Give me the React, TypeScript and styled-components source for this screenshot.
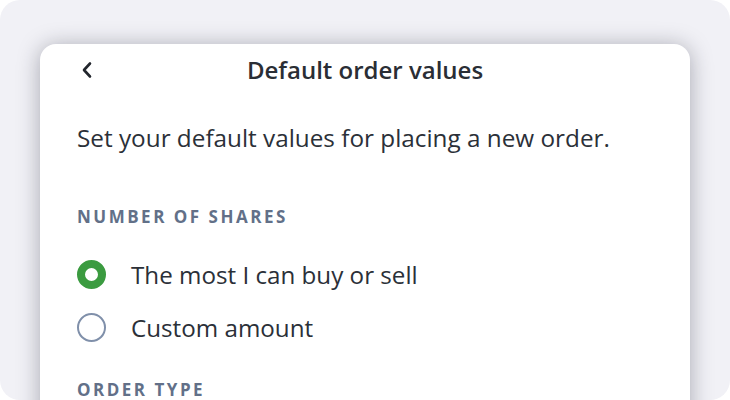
import React from "react";
import styled, { createGlobalStyle } from "styled-components";

const Global = createGlobalStyle`
  html, body { margin: 0; padding: 0; background: #ffffff; }
  body { font-family: "Open Sans", "Noto Sans", sans-serif; -webkit-font-smoothing: antialiased; }
`;

const Page = styled.div`
  width: 730px;
  height: 400px;
  box-sizing: border-box;
  background: #f1f1f6;
  border-radius: 20px;
  overflow: hidden;
  padding: 44px 40px 0;
`;

const Card = styled.div`
  background: #ffffff;
  border-radius: 16px 16px 0 0;
  box-shadow: 0 2px 22px rgba(30, 32, 50, 0.35);
  height: 400px;
  padding: 0 37px;
  box-sizing: border-box;
  color: #2b3038;
`;

const Header = styled.div`
  position: relative;
  height: 52px;
  display: flex;
  align-items: center;
  justify-content: center;
`;

const BackButton = styled.button`
  position: absolute;
  left: 0;
  top: 50%;
  transform: translateY(-50%);
  background: none;
  border: none;
  padding: 0;
  width: 20px;
  height: 20px;
  display: flex;
  align-items: center;
  justify-content: center;
  color: #22262d;
`;

const Title = styled.h1`
  margin: 0;
  font-size: 24px;
  line-height: 32px;
  font-weight: 600;
  color: #2a2e35;
`;

const Description = styled.p`
  margin: 26px 0 0;
  font-size: 24.3px;
  line-height: 32px;
  font-weight: 400;
`;

const SectionLabel = styled.div<{ $top: number }>`
  margin-top: ${(p) => p.$top}px;
  font-size: 17px;
  line-height: 22px;
  font-weight: 700;
  letter-spacing: 2.5px;
  color: #627088;
  text-transform: uppercase;
`;

const Options = styled.div`
  margin-top: 20px;
  display: flex;
  flex-direction: column;
`;

const OptionRow = styled.label`
  display: flex;
  align-items: center;
  height: 53px;
  gap: 25px;
  font-size: 24.2px;
  cursor: pointer;
`;

const Radio = styled.span<{ $checked: boolean }>`
  width: 29px;
  height: 29px;
  border-radius: 50%;
  box-sizing: border-box;
  flex-shrink: 0;
  background: #ffffff;
  border: ${(p) => (p.$checked ? "8.5px solid #3b9b40" : "2px solid #8090aa")};
`;

const OptionText = styled.span`
  color: #2b3038;
`;

export default function App() {
  const options = [
    { label: "The most I can buy or sell", checked: true },
    { label: "Custom amount", checked: false },
  ];
  return (
    <>
      <Global />
      <Page>
        <Card>
          <Header>
            <BackButton aria-label="Back">
              <svg width="14" height="18" viewBox="0 0 14 18" fill="none">
                <path d="M10 2.5 L4 9 L10 15.5" stroke="currentColor" strokeWidth="2.6" strokeLinecap="round" strokeLinejoin="round" />
              </svg>
            </BackButton>
            <Title>Default order values</Title>
          </Header>
          <Description>Set your default values for placing a new order.</Description>
          <SectionLabel $top={52}>Number of shares</SectionLabel>
          <Options>
            {options.map((o) => (
              <OptionRow key={o.label}>
                <Radio $checked={o.checked} />
                <OptionText>{o.label}</OptionText>
              </OptionRow>
            ))}
          </Options>
          <SectionLabel $top={25}>Order type</SectionLabel>
        </Card>
      </Page>
    </>
  );
}
